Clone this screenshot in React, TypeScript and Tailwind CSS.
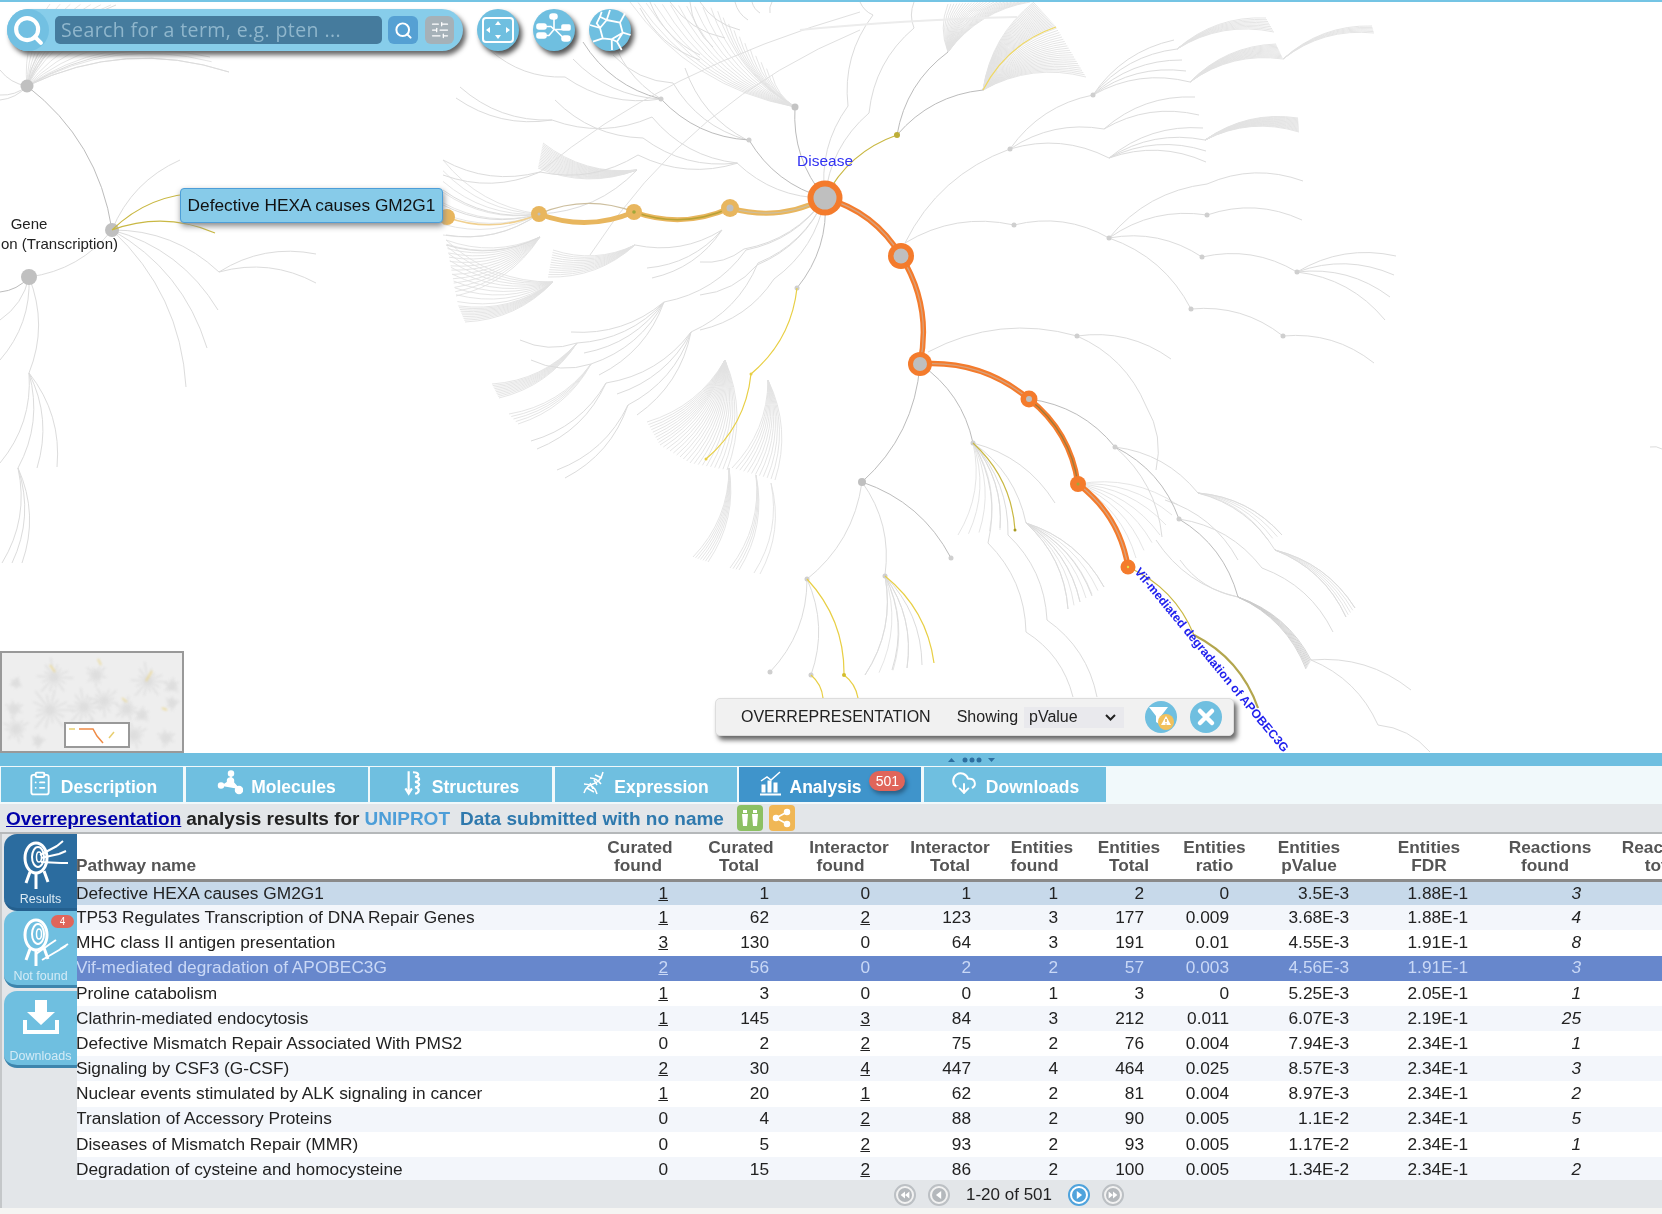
import { ClipboardList, CloudDownload, Search, SlidersHorizontal } from 'lucide-react';

type Pt = [number, number];

// every branch of the fireworks bends the same way, parent -> child
const arc = (x1: number, y1: number, x2: number, y2: number, b = 0.2) => {
  const cx = (x1 + x2) / 2 + (y2 - y1) * b;
  const cy = (y1 + y2) / 2 - (x2 - x1) * b;
  return `M${x1} ${y1}Q${cx} ${cy} ${x2} ${y2}`;
};

const edges = (list: number[][]) => list.map((e) => arc(e[0], e[1], e[2], e[3])).join('');

// n branches from one node to points spread along a polyline
const fan = (o: Pt, ends: Pt[], n: number) => {
  let d = '';
  for (let i = 0; i < n; i++) {
    const t = (i / (n - 1)) * (ends.length - 1);
    const k = Math.min(Math.floor(t), ends.length - 2);
    const f = t - k;
    d += arc(o[0], o[1], ends[k][0] + (ends[k + 1][0] - ends[k][0]) * f, ends[k][1] + (ends[k + 1][1] - ends[k][1]) * f);
  }
  return d;
};

const lightEdges = edges([
  [905, 243, 1010, 149], [1010, 149, 1093, 95], [1010, 149, 1104, 129], [1010, 149, 1109, 158],
  [1093, 95, 1174, 40], [1093, 95, 1177, 49], [1093, 95, 1182, 60], [1093, 95, 1186, 71], [1093, 95, 1190, 82],
  [1104, 129, 1195, 97], [1104, 129, 1199, 115],
  [1109, 158, 1203, 128], [1109, 158, 1205, 140], [1109, 158, 1206, 151], [1109, 158, 1206, 162],
  [905, 243, 1014, 225], [1014, 225, 1109, 238], [1109, 238, 1207, 184], [1109, 238, 1207, 215], [1109, 238, 1202, 257], [1109, 238, 1191, 309],
  [1207, 184, 1303, 181], [1207, 215, 1302, 220], [1202, 257, 1297, 272],
  [1297, 272, 1396, 256], [1297, 272, 1394, 275], [1297, 272, 1390, 297], [1297, 272, 1385, 320],
  [1191, 309, 1283, 336], [1283, 336, 1374, 363],
  [928, 352, 1077, 336], [1077, 336, 1171, 359], [1077, 336, 1146, 406], [1146, 406, 1156, 470],
  [1115, 447, 1162, 537], [1115, 447, 1198, 493], [1198, 493, 1282, 535], [1198, 493, 1275, 550],
  [1179, 519, 1262, 568], [1262, 568, 1333, 632], [1311, 660, 1378, 725], [1311, 660, 1411, 690], [1378, 725, 1430, 752],
  [1275, 550, 1355, 608], [1275, 550, 1346, 617], [1165, 500, 1238, 560], [1238, 597, 1156, 540], [1238, 597, 1180, 560],
  // top centre, disease going up
  [825, 198, 848, 106], [825, 198, 869, 113], [869, 113, 914, 28], [848, 106, 873, 15], [914, 28, 914, 2], [873, 15, 860, 2],
  [825, 198, 737, 163], [825, 198, 744, 249], [825, 198, 757, 265], [825, 198, 774, 279], [825, 198, 746, 250], [825, 198, 758, 263],
  [738, 163, 638, 155], [638, 155, 540, 172], [652, 117, 552, 120], [737, 163, 652, 117], [552, 120, 460, 87], [552, 120, 456, 98],
  [737, 163, 643, 138], [643, 138, 555, 100], [661, 99, 573, 59], [661, 99, 565, 77], [565, 77, 490, 50], [661, 99, 610, 30], [700, 60, 640, 8],
  [747, 140, 685, 68], [673, 83, 613, 55], [747, 140, 673, 83],
  [713, 47, 690, 2], [748, 20, 735, 2], [760, 13, 752, 2], [770, 13, 772, 2], [740, 30, 700, 2], [725, 38, 670, 2], [700, 55, 650, 2],
  [746, 250, 664, 302], [758, 263, 691, 332], [774, 279, 700, 330], [744, 249, 700, 262], [757, 265, 700, 295],
  [664, 302, 571, 332], [664, 302, 577, 343], [664, 302, 584, 353], [664, 302, 591, 364], [664, 302, 599, 375],
  [591, 364, 531, 360], [577, 343, 520, 340], [691, 332, 606, 383], [691, 332, 617, 394], [691, 332, 628, 405], [691, 332, 637, 415],
  [606, 383, 531, 441], [606, 383, 537, 449], [628, 405, 557, 470], [628, 405, 565, 478],
  [540, 172, 443, 160], [540, 172, 443, 175], [539, 214, 443, 190], [539, 214, 443, 205], [539, 214, 446, 235], [540, 237, 446, 245],
  [637, 170, 539, 214], [722, 230, 647, 268], [722, 230, 652, 278], [722, 230, 635, 245],
  // lower centre
  [862, 482, 806, 580], [862, 482, 885, 575], [807, 579, 770, 672], [807, 579, 811, 675], [885, 576, 922, 665], [885, 576, 907, 668], [885, 576, 892, 670], [885, 576, 865, 675],
  [973, 443, 1055, 503], [973, 443, 1026, 523], [973, 443, 1008, 535], [973, 443, 988, 543], [973, 443, 1000, 528],
  [988, 543, 1026, 632], [1008, 535, 1047, 620], [1026, 632, 1073, 697], [1047, 620, 1097, 697], [1026, 523, 1104, 587], [1026, 523, 1092, 596], [1026, 523, 1080, 602], [1026, 523, 1068, 609],
  // gene expression cluster
  [112, 230, 180, 160], [112, 230, 219, 272], [219, 272, 316, 254], [219, 272, 316, 283], [112, 230, 218, 310], [112, 230, 207, 348], [112, 230, 186, 387],
  [112, 230, 29, 277], [29, 277, 29, 373], [29, 277, 0, 360], [29, 277, 0, 320], [29, 373, 57, 467], [29, 373, 37, 468], [29, 373, 18, 468], [29, 373, 0, 463],
  [18, 468, 22, 563], [18, 468, 12, 563], [18, 468, 2, 563], [27, 86, 116, 5], [27, 86, 90, 15], [27, 86, 60, 30], [27, 86, 210, 57], [27, 86, 229, 72], [27, 86, 0, 70], [27, 86, 0, 95], [27, 86, 0, 100],
  [1650, 447, 1662, 449],
]);

const midEdges = edges([
  [825, 198, 749, 140], [749, 140, 661, 99], [661, 99, 583, 42], [825, 198, 795, 107], [825, 198, 797, 288],
  [897, 135, 948, 52], [897, 135, 983, 90],
  [920, 364, 862, 482], [920, 364, 973, 443], [862, 482, 951, 558],
  [1029, 399, 1115, 447], [1115, 447, 1179, 519], [1179, 519, 1238, 597],
  [27, 86, 112, 230], [29, 277, 0, 292],
]);

const denseFans = [
  fan([948, 52], [[948, 4], [985, 2], [1030, 2]], 26),
  fan([983, 90], [[1034, 2], [1056, 27], [1086, 77]], 46),
  fan([1177, 49], [[1266, 18], [1274, 32]], 9),
  fan([1190, 82], [[1276, 44], [1283, 59]], 14),
  fan([1283, 59], [[1372, 26], [1374, 33]], 6),
  fan([1205, 140], [[1298, 118], [1299, 132]], 16),
  fan([725, 360], [[647, 422], [660, 445], [690, 463], [727, 470]], 28),
  fan([768, 380], [[732, 468], [775, 480]], 12),
  fan([577, 343], [[492, 384], [499, 398]], 10),
  fan([591, 364], [[509, 414], [518, 424]], 5),
  fan([729, 468], [[693, 557], [708, 562]], 7),
  fan([756, 475], [[730, 568], [739, 570]], 4),
  fan([771, 483], [[754, 573], [760, 574]], 2),
  fan([637, 170], [[543, 143], [538, 168]], 18),
  fan([553, 282], [[446, 240], [458, 305], [465, 322]], 20),
  fan([540, 237], [[446, 240], [456, 296]], 14),
  fan([539, 214], [[443, 160], [443, 235]], 8),
  fan([635, 245], [[548, 277], [553, 250]], 12),
  fan([795, 107], [[630, 2], [715, 8], [772, 75]], 22),
  fan([1078, 484], [[1136, 558], [1160, 535], [1178, 505]], 7),
  fan([1198, 493], [[1282, 535], [1268, 540]], 4),
  fan([1275, 550], [[1355, 608], [1346, 617]], 5),
  fan([1026, 523], [[1068, 609], [1104, 587]], 7),
  fan([973, 443], [[958, 535], [1000, 530]], 5),
  fan([885, 576], [[865, 675], [907, 668]], 4),
  fan([27, 86], [[50, 4], [116, 5], [229, 72]], 14),
].join('');

const midFans = fan([1238, 597], [[1306, 669], [1311, 660]], 8);

// little firework blobs of the overview map
const minimapBlobs: [number, number, number][] = [
  [52, 24, 18], [94, 22, 11], [146, 28, 18], [102, 48, 15], [48, 57, 22], [82, 54, 18], [125, 56, 12], [14, 30, 6], [12, 56, 9], [170, 33, 8], [14, 76, 13], [36, 88, 7], [88, 78, 12], [132, 82, 13], [164, 85, 9], [170, 50, 7], [140, 62, 8],
];
const minimapStars = minimapBlobs
  .map(([x, y, r]) => {
    let d = '';
    for (let i = 0; i < 14; i++) {
      const a = (i / 14) * Math.PI * 2 + r;
      const l = r * (0.6 + ((i * 7) % 5) * 0.12);
      d += `M${x} ${y}L${(x + Math.cos(a) * l).toFixed(1)} ${(y + Math.sin(a) * l).toFixed(1)}`;
    }
    return d;
  })
  .join('');

const Node = ({ x, y, r, inner, color = '#f47b2c', core = '#bfbfbf' }: { x: number; y: number; r: number; inner: number; color?: string; core?: string }) => (
  <>
    <circle cx={x} cy={y} r={r} fill={color} />
    <circle cx={x} cy={y} r={inner} fill={core} />
  </>
);

const Fireworks = () => (
  <svg className="block w-[1662px] h-[751px]" viewBox="0 2 1662 751" fill="none">
    <path d={denseFans} stroke="#e2e2e2" strokeWidth="0.9" />
    <path d={lightEdges} stroke="#dcdcdc" strokeWidth="1" />
    <path d={midEdges} stroke="#bcbcbc" strokeWidth="1" />
    <path d={midFans} stroke="#cacaca" strokeWidth="0.8" />
    <path d="M860 12Q660 70 540 172M860 30Q690 100 590 255" stroke="#e0e0e0" strokeWidth="1" />
    <path d="M800 30Q900 20 1017 17" stroke="#ececec" strokeWidth="2" />
    {[[1010, 149], [1093, 95], [1014, 225], [1109, 238], [1077, 336], [1207, 215], [1297, 272], [1202, 257], [1191, 309], [1283, 336], [1179, 519], [1115, 447], [951, 558], [973, 443], [807, 579], [885, 576], [770, 672], [811, 675], [661, 99], [749, 140], [797, 288]].map(([x, y]) => (
      <circle key={`${x}-${y}`} cx={x} cy={y} r="2.5" fill="#cfcfcf" />
    ))}
    <circle cx="795" cy="107" r="3.5" fill="#c4c4c4" />
    <circle cx="862" cy="482" r="4" fill="#c0c0c0" />
    <circle cx="27" cy="86" r="6.5" fill="#c0c0c0" />
    <circle cx="112" cy="230" r="7" fill="#c0c0c0" />
    <circle cx="29" cy="277" r="8" fill="#c0c0c0" />

    {/* found pathways */}
    <path d={arc(983, 90, 1056, 27)} stroke="#f0d860" strokeWidth="1.2" />
    <path d={edges([[797, 288, 751, 374], [751, 374, 706, 459], [807, 579, 844, 675], [844, 675, 858, 698], [811, 675, 823, 698], [885, 576, 934, 663]])} stroke="#e8cf45" strokeWidth="1.2" />
    <path d={edges([[825, 198, 897, 135], [973, 443, 1015, 530], [1128, 567, 1194, 635], [112, 230, 202, 193], [112, 230, 215, 233]])} stroke="#c9b843" strokeWidth="1.2" />
    <path d={arc(1194, 635, 1258, 708)} stroke="#b3a64d" strokeWidth="2.2" />
    <circle cx="897" cy="135" r="3" fill="#bdae38" />
    <circle cx="1015" cy="530" r="1.5" fill="#a89a20" />
    <circle cx="706" cy="459" r="1.5" fill="#e8cf45" />
    <circle cx="751" cy="374" r="1.5" fill="#e8cf45" />
    <circle cx="844" cy="675" r="2" fill="#d4bd2c" />

    {/* selected hit */}
    <path d={edges([[825, 198, 730, 208], [730, 208, 634, 212], [634, 212, 539, 214]])} stroke="#e8b65e" strokeWidth="5" />
    <path d={edges([[825, 198, 730, 208], [539, 214, 634, 212]])} stroke="#cdbf9f" strokeWidth="1.2" />
    <path d={arc(730, 208, 634, 212)} stroke="#b9a235" strokeWidth="1.5" />
    <path d={arc(539, 214, 446, 217)} stroke="#f0d090" strokeWidth="1.5" />
    <Node x={730} y={208} r={9} inner={3.5} color="#e8b65e" />
    <Node x={634} y={212} r={8} inner={1.8} color="#e8b65e" core="#9fa83a" />
    <Node x={539} y={214} r={8} inner={1.5} color="#e8b65e" />
    <circle cx="447" cy="217" r="8" fill="#e8b65e" />

    <path d={edges([[825, 198, 901, 256], [901, 256, 920, 364], [920, 364, 1029, 399], [1029, 399, 1078, 484], [1078, 484, 1128, 567]])} stroke="#f47b2c" strokeWidth="5.5" />
    <path d={edges([[825, 198, 901, 256], [901, 256, 920, 364], [920, 364, 1029, 399], [1078, 484, 1128, 567]])} stroke="#d8a27c" strokeWidth="1.3" />
    <path d={arc(1029, 399, 1078, 484)} stroke="#9b7b3b" strokeWidth="1.3" />
    <Node x={825} y={198} r={17.5} inner={11.5} />
    <Node x={901} y={256} r={13} inner={7.5} />
    <Node x={920} y={364} r={12} inner={7} />
    <Node x={1029} y={399} r={8.5} inner={3} />
    <Node x={1078} y={484} r={8} inner={1.5} core="#9fa83a" />
    <Node x={1128} y={567} r={7.5} inner={1.2} core="#e5e04a" />

    <text x="825" y="166" textAnchor="middle" fill="#3232f2" fontFamily="Liberation Sans, sans-serif" fontSize="15.5">Disease</text>
    <text x="1134" y="572" transform="rotate(50.5 1134 572)" fill="#1f1fee" fontFamily="Liberation Sans, sans-serif" fontSize="12.3" fontWeight="700">Vif-mediated degradation of APOBEC3G</text>
    <text x="29" y="229" textAnchor="middle" fill="#222" fontFamily="Liberation Sans, sans-serif" fontSize="15">Gene</text>
    <text x="118" y="249" textAnchor="end" fill="#222" fontFamily="Liberation Sans, sans-serif" fontSize="15">on (Transcription)</text>
  </svg>
);

const RoundIcon = ({ children }: { children: React.ReactNode }) => (
  <button className="w-[42px] h-[42px] rounded-full bg-[#6fbfe0] shadow-[3px_4px_5px_#555]">
    <svg className="block" width="42" height="42" viewBox="0 0 42 42" fill="none" stroke="white" strokeWidth="1.6">
      {children}
    </svg>
  </button>
);

const SearchBar = () => (
  <div className="absolute left-[7px] top-[7px] flex items-center gap-[6px]">
    <div className="w-[456px] h-[42px] rounded-[21px] bg-[#87cdea] flex items-center shadow-[3px_4px_5px_#666]">
      <div className="w-[42px] h-[42px] rounded-full bg-[#72c0e2] flex items-center justify-center">
        <Search className="w-[33px] h-[33px] text-white" strokeWidth={3} />
      </div>
      <input
        readOnly
        placeholder="Search for a term, e.g. pten ..."
        className="ml-[6px] w-[327px] h-[28px] rounded-[5px] bg-[#457b9d] px-[6px] text-[19.5px] tracking-[0.4px] [font-family:'Open_Sans',sans-serif] placeholder:text-[#8fb6cc] outline-none"
      />
      <button className="ml-[6px] w-[30px] h-[28px] rounded-[6px] bg-[#55a0d3] flex items-center justify-center">
        <Search className="w-[19px] h-[19px] text-white" strokeWidth={2.5} />
      </button>
      <button className="ml-[7px] w-[29px] h-[28px] rounded-[6px] bg-[#a5b1b8] flex items-center justify-center">
        <SlidersHorizontal className="w-[20px] h-[20px] text-white" strokeWidth={1.5} />
      </button>
    </div>
    <div className="ml-[8px] flex gap-[14px]">
      <RoundIcon>
        <rect x="6" y="9" width="30" height="24" rx="3" strokeWidth="2" />
        <path d="M21 12l3 4h-6zM21 30l3-4h-6zM9 21l4-3v6zM33 21l-4-3v6z" fill="white" stroke="none" />
      </RoundIcon>
      <RoundIcon>
        <rect x="4" y="15" width="9" height="5" rx="2" fill="white" />
        <rect x="4" y="24" width="9" height="5" rx="2" fill="white" />
        <rect x="17" y="5" width="7" height="5" rx="2.5" fill="white" />
        <rect x="29" y="16" width="8" height="5" rx="1" fill="white" />
        <rect x="29" y="27" width="8" height="5" rx="2.500" fill="white" />
        <path d="M13 17.500h5l3 3-5 6h-3M21 10v10.500h8M22 20.500l8 8" />
      </RoundIcon>
      <RoundIcon>
        <path
          d="M11 19L17.700 11L31 13.700L33.700 23.700L22.700 30.300L13.700 29.300ZM17.700 11L21 1M31 13.700L36 4.300M11 19L1 16M13.700 29.300L4 32.700M22.700 30.300L23 41M33.700 23.700L41.700 26M33.700 23.700L28 32.700L32.700 41M22.700 30.300L28 32.700M17.700 11L11 7.700L12.700 2.700M11 7.700L7.700 14.300L11 19"
          strokeWidth="1.800"
          strokeLinejoin="round"
        />
      </RoundIcon>
    </div>
  </div>
);

const AnalysisPanel = () => (
  <div className="absolute left-[715px] top-[696px] w-[519px] h-[38px] rounded-[5px] bg-[#f1f1f1] border border-[#ddd] shadow-[3px_4px_5px_#666] flex items-center [font-family:'Liberation_Sans',sans-serif] text-[16px] text-[#222]">
    <span className="ml-[25px]">OVERREPRESENTATION</span>
    <span className="ml-[26px]">Showing</span>
    <div className="ml-[6px] w-[100px] h-[21px] bg-[#e9e9ed] flex items-center justify-between pl-[5px] pr-[8px]">
      <span>pValue</span>
      <svg width="11" height="7" viewBox="0 0 11 7" fill="none" stroke="#222" strokeWidth="2"><path d="M1 1l4.500 4.500L10 1" /></svg>
    </div>
    <button className="ml-[21px] w-[32px] h-[32px] rounded-full bg-[#6fbfe0] relative">
      <svg className="absolute inset-0" viewBox="0 0 32 32">
        <path d="M4 6h19l-7 9v9l-5-3v-6z" fill="white" />
        <circle cx="21" cy="21" r="8" fill="#f2c15c" />
        <path d="M21 15l5 9H16z" fill="white" />
        <path d="M21 18v3M21 22.500v1" stroke="#e0a030" strokeWidth="1.300" />
      </svg>
    </button>
    <button className="ml-[13px] w-[32px] h-[32px] rounded-full bg-[#6fbfe0] flex items-center justify-center">
      <svg width="20" height="20" viewBox="0 0 20 20" stroke="white" strokeWidth="4.500" strokeLinecap="round"><path d="M4 4l12 12M16 4L4 16" /></svg>
    </button>
  </div>
);

const Minimap = () => (
  <div className="absolute left-0 bottom-0 w-[184px] h-[102px] border-2 border-[#999] bg-[#eeeeee] overflow-hidden">
    <svg className="absolute inset-0 blur-[1px]" width="180" height="98" viewBox="0 0 180 98" fill="none">
      <path d={minimapStars} stroke="#dedede" strokeWidth="1.500" />
      <path d="M48 12l5 7M96 6l3 6M150 18l-6 10M160 55l5 2M120 45l5 4" stroke="#ecd890" strokeWidth="1.500" />
    </svg>
    <div className="absolute left-[62px] top-[69px] w-[66px] h-[26px] bg-white border-2 border-[#999]">
      <svg className="block" width="62" height="22" viewBox="0 0 62 22" fill="none">
        <path d="M13 5h14l4 7 6 7" stroke="#ef8a45" strokeWidth="1.500" />
        <path d="M3 5h6M48 8l-5 6" stroke="#e8cf70" strokeWidth="1.500" />
      </svg>
    </div>
  </div>
);

const MoleculesIcon = () => (
  <svg width="26" height="26" viewBox="0 0 26 26" fill="white" stroke="white" strokeWidth="1.500">
    <path d="M5 16l9-6 8 9M14 10V4" />
    <circle cx="14" cy="3.500" r="2.500" />
    <circle cx="4" cy="15.500" r="2.500" />
    <circle cx="13.500" cy="11" r="3" />
    <circle cx="22" cy="20" r="3.500" />
  </svg>
);

const StructuresIcon = () => (
  <svg width="21" height="28" viewBox="0 0 19 26" fill="none" stroke="white" strokeWidth="2">
    <path d="M5 2v20M2 18l3 5 3-5" />
    <path d="M9 3c5 0 7 3 2 4 5 1 5 4 0 5 5 1 5 4 0 5 5 1 4 5 0 6" />
  </svg>
);

const ExpressionIcon = () => (
  <svg width="24" height="26" viewBox="0 0 24 26" fill="none" stroke="white" strokeWidth="1.500">
    <path d="M2 23c3-9 9-8 13-11 3-2 5-6 6-10" />
    <path d="M2 14c6 0 11 2 13 10M8 8c4 0 8 2 11 6M13 5l7 3M5 18l7 4M8 13l3 6M12 10l3 5" />
  </svg>
);

const AnalysisIcon = () => (
  <svg width="23" height="26" viewBox="0 0 23 26" fill="white" stroke="white">
    <rect x="3" y="15" width="3" height="7" />
    <rect x="9" y="11" width="3" height="11" />
    <rect x="15" y="13" width="3" height="9" />
    <path d="M1 24.500h21" strokeWidth="2" />
    <path d="M2 11l6-4 4 3 9-8" fill="none" strokeWidth="1.500" />
  </svg>
);

const tabs = [
  { label: 'Description', icon: <ClipboardList className="w-[26px] h-[29px]" strokeWidth={1.7} /> },
  { label: 'Molecules', icon: <MoleculesIcon /> },
  { label: 'Structures', icon: <StructuresIcon /> },
  { label: 'Expression', icon: <ExpressionIcon /> },
  { label: 'Analysis', icon: <AnalysisIcon />, active: true, badge: '501' },
  { label: 'Downloads', icon: <CloudDownload className="w-[28px] h-[26px]" strokeWidth={1.8} /> },
];

const columns = [
  { head: ['Curated', 'found'], width: 'w-[86px]', pad: 'pr-[15px]', sub: 'pr-[4px]' },
  { head: ['Curated', 'Total'], width: 'w-[116px]', pad: 'pr-[30px]', sub: 'pr-[4px]' },
  { head: ['Interactor', 'found'], width: 'w-[100px]', pad: 'pr-[29px]', sub: 'pr-[17px]' },
  { head: ['Interactor', 'Total'], width: 'w-[102px]', pad: 'pr-[30px]', sub: '' },
  { head: ['Entities', 'found'], width: 'w-[82px]', pad: 'pr-[25px]', sub: 'pr-[15px]' },
  { head: ['Entities', 'Total'], width: 'w-[92px]', pad: 'pr-[31px]', sub: '' },
  { head: ['Entities', 'ratio'], width: 'w-[79px]', pad: 'pr-[25px]', sub: '' },
  { head: ['Entities', 'pValue'], width: 'w-[110px]', pad: 'pr-[15px]', sub: '' },
  { head: ['Entities', 'FDR'], width: 'w-[130px]', pad: 'pr-[26px]', sub: '' },
  { head: ['Reactions', 'found'], width: 'w-[112px]', pad: 'pr-[25px]', sub: 'pr-[10px]' },
  { head: ['Reactions', 'total'], width: 'w-[114px]', pad: 'pr-[25px]', sub: '' },
];

const rows: (string | number)[][] = [
  ['Defective HEXA causes GM2G1', 1, 1, 0, 1, 1, 2, 0, '3.5E-3', '1.88E-1', 3, 6],
  ['TP53 Regulates Transcription of DNA Repair Genes', 1, 62, 2, 123, 3, 177, 0.009, '3.68E-3', '1.88E-1', 4, 25],
  ['MHC class II antigen presentation', 3, 130, 0, 64, 3, 191, 0.01, '4.55E-3', '1.91E-1', 8, 31],
  ['Vif-mediated degradation of APOBEC3G', 2, 56, 0, 2, 2, 57, 0.003, '4.56E-3', '1.91E-1', 3, 9],
  ['Proline catabolism', 1, 3, 0, 0, 1, 3, 0, '5.25E-3', '2.05E-1', 1, 4],
  ['Clathrin-mediated endocytosis', 1, 145, 3, 84, 3, 212, 0.011, '6.07E-3', '2.19E-1', 25, 64],
  ['Defective Mismatch Repair Associated With PMS2', 0, 2, 2, 75, 2, 76, 0.004, '7.94E-3', '2.34E-1', 1, 3],
  ['Signaling by CSF3 (G-CSF)', 2, 30, 4, 447, 4, 464, 0.025, '8.57E-3', '2.34E-1', 3, 12],
  ['Nuclear events stimulated by ALK signaling in cancer', 1, 20, 1, 62, 2, 81, 0.004, '8.97E-3', '2.34E-1', 2, 8],
  ['Translation of Accessory Proteins', 0, 4, 2, 88, 2, 90, 0.005, '1.1E-2', '2.34E-1', 5, 14],
  ['Diseases of Mismatch Repair (MMR)', 0, 5, 2, 93, 2, 93, 0.005, '1.17E-2', '2.34E-1', 1, 3],
  ['Degradation of cysteine and homocysteine', 0, 15, 2, 86, 2, 100, 0.005, '1.34E-2', '2.34E-1', 2, 7],
];

const rowClass = (i: number) => {
  if (i === 0) return 'bg-[#c7d9ea] text-[#222]';
  if (i === 3) return 'bg-[#6787cc] text-[#c9d8f6]';
  return i % 2 === 1 ? 'bg-[#f3f6fb] text-[#222]' : 'bg-white text-[#222]';
};

const ResultsTable = () => (
  <div className="h-[346px] bg-white overflow-hidden">
    <table className="table-fixed w-[1644px] border-collapse text-[17.3px] -ml-[1px]">
      <colgroup>
        <col className="w-[521px]" />
        {columns.map((c) => (
          <col key={c.head.join()} className={c.width} />
        ))}
      </colgroup>
      <thead>
        <tr className="h-[46px] border-b-[3px] border-[#8a8a8a] text-[#555] font-bold">
          <th className="text-left align-bottom pb-[5px] leading-[18px]">Pathway name</th>
          {columns.map((c) => (
            <th key={c.head.join()} className="text-center align-bottom pb-[5px] leading-[18px]">
              {c.head[0]}
              <span className={`block ${c.sub}`}>{c.head[1]}</span>
            </th>
          ))}
        </tr>
      </thead>
      <tbody>
        {rows.map((r, i) => (
          <tr key={String(r[0])} className={`h-[25.18px] ${rowClass(i)}`}>
            <td className="whitespace-nowrap leading-none">{r[0]}</td>
            {r.slice(1).map((v, j) => (
              <td key={j} className={`text-right leading-none ${columns[j].pad} ${j >= 9 ? 'italic' : ''} ${(j === 0 || j === 2) && v !== 0 ? 'underline' : ''}`}>
                {v}
              </td>
            ))}
          </tr>
        ))}
      </tbody>
    </table>
  </div>
);

const PagerButton = ({ dir, on, double }: { dir: 'left' | 'right'; on?: boolean; double?: boolean }) => (
  <div className={`w-[22px] h-[22px] rounded-full border-2 flex items-center justify-center ${on ? 'bg-white border-[#4fa3dc]' : 'bg-[#f2f2f2] border-[#bcc0c4]'}`}>
    <svg width="14" height="14" viewBox="0 0 16 16">
      <circle cx="8" cy="8" r="8" fill={on ? '#4fa3dc' : '#b4b8bc'} />
      {dir === 'right' ? <path d={double ? 'M3 4l5 4-5 4zM8 4l5 4-5 4z' : 'M5.500 3.500l6 4.500-6 4.500z'} fill="white" /> : <path d={double ? 'M13 4L8 8l5 4zM8 4L3 8l5 4z' : 'M10.500 3.500L4.500 8l6 4.500z'} fill="white" />}
    </svg>
  </div>
);

const TargetIcon = ({ arrowsDown }: { arrowsDown?: boolean }) => (
  <svg width="62" height="54" viewBox="0 0 62 54" fill="none" stroke="white">
    <ellipse cx="26" cy="19" rx="11" ry="15" strokeWidth="3" />
    <ellipse cx="28" cy="18" rx="6" ry="10" strokeWidth="2" />
    <ellipse cx="29" cy="18" rx="2.500" ry="5" strokeWidth="1.500" />
    <path d="M20 33l-4 11M26 35v15M34 32l4 11" strokeWidth="3" />
    {arrowsDown ? (
      <path d="M26 38l14-10M32 44l24-14M40 28l6-4M50 33l8-5" strokeWidth="2" />
    ) : (
      <path d="M30 16l17-9M47 7l6-5M31 19l18-4M49 15l7-3M31 23l20 1M51 24l7 0" strokeWidth="2" />
    )}
  </svg>
);

const SideButton = ({ label, active, top, children }: { label: string; active?: boolean; top: string; children: React.ReactNode }) => (
  <button className={`relative flex flex-col items-center w-[73px] h-[77px] ml-[2px] rounded-l-[13px] border-b-[3px] ${top} ${active ? 'bg-[#2b6c9f] border-[#24608f] text-[#dbeaf4]' : 'bg-[#6fbfe0] border-[#3d85ad] text-[#d3ebf6]'}`}>
    <div className="h-[57px] pt-[5px]">{children}</div>
    <span className="text-[12.5px] leading-[14px] mt-[1px]">{label}</span>
  </button>
);

const App = () => (
  <div className="w-[1662px] h-[1214px] overflow-hidden flex flex-col bg-white blur-[0.4px] [font-family:'Liberation_Sans',Arial,sans-serif]">
    <div className="h-[2px] bg-[#74c4e4]" />
    <section className="relative h-[751px] overflow-hidden">
      <Fireworks />
      <SearchBar />
      <div className="absolute left-[180px] top-[186px] w-[263px] h-[35px] rounded-[4px] bg-[#87cbe9] border border-[#4d9ed8] shadow-[1px_3px_6px_#888] flex items-center justify-center text-[17.3px] text-[#111]">
        Defective HEXA causes GM2G1
      </div>
      <Minimap />
      <AnalysisPanel />
    </section>

    <div className="h-[13px] bg-[#6fbfe0] flex items-center justify-center pl-[280px]">
      <svg width="47" height="8" viewBox="0 0 47 8" fill="#2d6fa0">
        <path d="M0 6l3.500-4 3.500 4zM40 2l3.500 4 3.500-4z" />
        <circle cx="17" cy="4" r="2.500" />
        <circle cx="24" cy="4" r="2.500" />
        <circle cx="31" cy="4" r="2.500" />
      </svg>
    </div>

    <nav className="h-[39px] bg-[#f1f9fb] flex items-start gap-[2.500px] pl-[1px] pt-[1px]">
      {tabs.map((t) => (
        <div key={t.label} className={`w-[182px] h-[35px] flex items-center justify-center gap-[8px] text-white font-bold text-[17.500px] ${t.active ? 'bg-[#3f94cb]' : 'bg-[#6fbfe0]'}`}>
          <span className="-mt-[3px]">{t.icon}</span>
          <span className="mt-[5px]">{t.label}</span>
          {t.badge && (
            <span className="-mt-[7px] -mr-[4px] w-[36px] h-[20px] rounded-[10px] bg-[#e0655a] text-[14px] font-normal flex items-center justify-center shadow-[2px_3px_4px_#2a5f86]">
              {t.badge}
            </span>
          )}
        </div>
      ))}
    </nav>

    <header className="h-[28px] bg-[#e3e6e9] flex items-center pl-[6px] font-bold text-[19px] text-[#222] -mt-[1px] gap-[5px]">
      <a href="#" className="text-[#0000aa] underline mt-[2px]">Overrepresentation</a>
      <span className="mt-[2px]">analysis results for</span>
      <span className="mt-[2px] text-[#4d9ed8]">UNIPROT</span>
      <span className="mt-[2px] ml-[5px] text-[#2f79ad]">Data submitted with no name</span>
      <span className="ml-[8px] w-[26px] h-[26px] rounded-[4px] bg-[#8cc063] flex items-center justify-center">
        <svg width="20" height="20" viewBox="0 0 20 20" fill="white"><path d="M3 2h4v3H3zM2 6h6l-1 12H3zM13 2h4v3h-4zM12 6h6l-1 12h-4z" /></svg>
      </span>
      <span className="ml-[1px] w-[26px] h-[26px] rounded-[4px] bg-[#f0b756] flex items-center justify-center">
        <svg width="20" height="20" viewBox="0 0 20 20" fill="white" stroke="white" strokeWidth="1.500"><path d="M4 10l11-6M4 10l11 6" /><circle cx="4" cy="10" r="2.500" /><circle cx="15" cy="4" r="2.500" /><circle cx="15" cy="16" r="2.500" /></svg>
      </span>
    </header>

    <main className="flex h-[376px] border-t-2 border-[#b5b8ba] bg-[#e3e6e9]">
      <aside className="w-[77px] shrink-0 border-l-2 border-[#c4c7c9] flex flex-col">
        <SideButton label="Results" active top="">
          <TargetIcon />
        </SideButton>
        <div className="relative">
          <SideButton label="Not found" top="">
            <TargetIcon arrowsDown />
          </SideButton>
          <span className="absolute left-[49px] top-[4px] w-[23px] h-[13px] rounded-[7px] bg-[#e0655a] text-white text-[10px] leading-[13px] text-center">4</span>
        </div>
        <SideButton label="Downloads" top="mt-[3px]">
          <svg width="40" height="38" viewBox="0 0 40 38" fill="white" className="mt-[3px]">
            <path d="M14 1h12v12h8L20 26 6 13h8z" />
            <path d="M2 21h4v10h28V21h4v14H2z" />
          </svg>
        </SideButton>
      </aside>
      <div className="min-w-0 flex-1 flex flex-col">
        <ResultsTable />
        <div className="h-[28px] flex items-center pl-[817px] pt-[1px] gap-[12px] text-[17px] text-[#222]">
          <PagerButton dir="left" double />
          <PagerButton dir="left" />
          <span className="mx-[4px]">1-20 of 501</span>
          <PagerButton dir="right" on />
          <PagerButton dir="right" double />
        </div>
      </div>
    </main>
    <div className="flex-1 bg-[#f5f5f3]" />
  </div>
);

export default App;
